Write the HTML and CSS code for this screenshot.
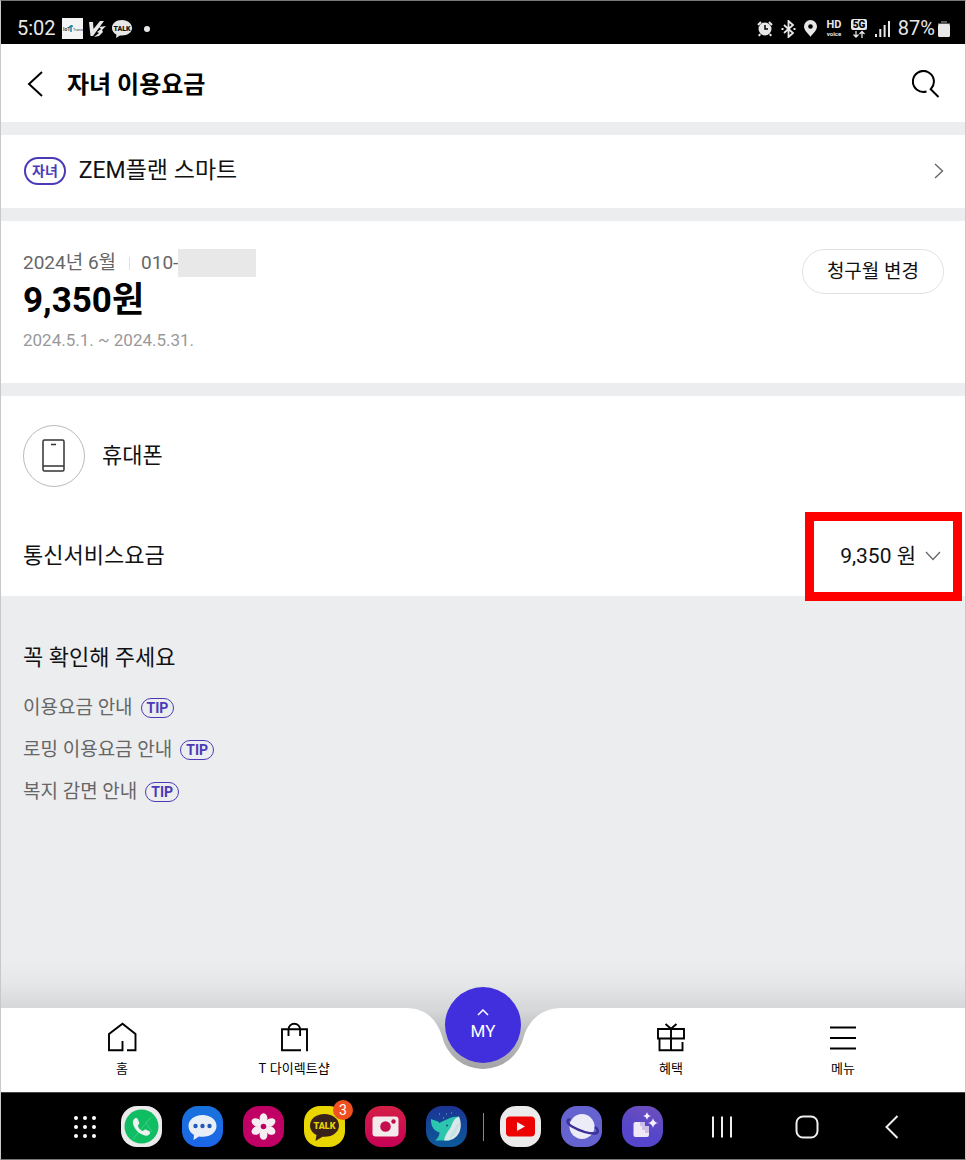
FILE: index.html
```html
<!DOCTYPE html>
<html lang="ko">
<head>
<meta charset="utf-8">
<meta name="viewport" content="width=device-width, initial-scale=1">
<title>자녀 이용요금</title>
<link rel="stylesheet" href="styles.css">
</head>
<body>
<div class="device">
  <div class="status">
    <div class="status-left">
      <span class="status-text">5:02</span>
      <svg width="21" height="21" viewBox="0 0 21 21" aria-hidden="true"><rect width="21" height="21" fill="#f4f4f4"/><text x="1" y="13" font-size="5" font-weight="700" fill="#444">IoT</text><text x="11" y="13" font-size="4" fill="#444">Trans</text><path d="M9 7v7M7 9l4-1" stroke="#1d8aa5" stroke-width="1.5"/></svg>
      <svg class="v3" width="17" height="18" viewBox="0 0 17 18" aria-hidden="true"><path d="M0 2h4l.5 7L11 1h4L4 16H1.500zM10 7l7-1-4 4 1 2-4 4-5 1 5-4-2-1 4-3z" fill="#e8e8e8"/></svg>
      <svg class="talk-mini" width="20" height="18" viewBox="0 0 20 18" aria-hidden="true"><path d="M10 0C4 0 0 3.500 0 8c0 3 2 5.500 4.500 6.700L4 18l4-2.500h2c6 0 10-3.500 10-7.500S16 0 10 0z" fill="#e8e8e8"/><text x="10" y="11" font-size="7" font-weight="900" text-anchor="middle" fill="#111">TALK</text></svg>
      <span class="dot"></span>
    </div>
    <div class="status-right">
      <svg width="16" height="17" viewBox="0 0 16 17" aria-hidden="true"><path d="M1 5l3-3M15 5l-3-3M3 14l-1 2M13 14l1 2" stroke="#e8e8e8" stroke-width="2"/><circle cx="8" cy="9" r="6.500" fill="#e8e8e8"/><path d="M8 5v4h3" stroke="#000" stroke-width="1.500" fill="none"/></svg>
      <svg width="15" height="18" viewBox="0 0 15 18" aria-hidden="true"><path d="M3 5l9 8-4.500 4V1L12 5l-9 8M0.500 9h2M12.500 9h2" stroke="#e8e8e8" stroke-width="1.800" fill="none"/></svg>
      <svg width="13" height="17" viewBox="0 0 13 17" aria-hidden="true"><path d="M6.500 0a6.500 6.500 0 0 1 6.500 6.500C13 11 8 14 6.500 17 5 14 0 11 0 6.500A6.500 6.500 0 0 1 6.500 0z" fill="#e8e8e8"/><circle cx="6.500" cy="6.500" r="2.300"/></svg>
      <svg width="18" height="22" viewBox="0 0 18 22" aria-hidden="true"><text x="9" y="10" font-size="11" font-weight="700" text-anchor="middle" fill="#e8e8e8">HD</text><text x="9" y="18" font-size="6" font-weight="700" text-anchor="middle" fill="#e8e8e8">voice</text></svg>
      <svg width="16" height="19" viewBox="0 0 16 19" aria-hidden="true"><rect width="16" height="11" rx="2" fill="#e8e8e8"/><text x="8" y="9" font-size="10" font-weight="900" text-anchor="middle" fill="#000">5G</text><path d="M5 12v6M2.500 15.500L5 18 7.500 15.500M11 19v-6M8.500 15L11 12.500l2.500 2.500" stroke="#e8e8e8" stroke-width="1.300" fill="none"/></svg>
      <svg width="15" height="17" viewBox="0 0 15 17" aria-hidden="true"><path d="M1 17v-3M5.300 17V9M9.600 17V5M14 17V1" stroke="#e8e8e8" stroke-width="2"/></svg>
      <span class="battery-group"><span class="status-text">87%</span>
      <svg width="12" height="16" viewBox="0 0 12 16" aria-hidden="true"><path d="M3 0h6v2h3v2H0V2h3z" fill="#555"/><rect y="3" width="12" height="13" rx="1.500" fill="#e8e8e8"/></svg></span>
    </div>
  </div>

  <header class="header">
    <button class="icon-button back" aria-label="뒤로"><svg width="18" height="26" viewBox="0 0 18 26"><path d="M16 1L3 13l13 12" fill="none" stroke="#000" stroke-width="2"/></svg></button>
    <h1>자녀 이용요금</h1>
    <button class="icon-button" aria-label="검색"><svg width="28" height="28" viewBox="0 0 28 28"><path d="M14.500 21.500A10.500 10.500 0 1 1 19 18.700M18 18.500L26.500 27" fill="none" stroke="#000" stroke-width="2"/></svg></button>
  </header>

  <main>
    <a class="plan card" href="#plan">
      <span class="child-badge">자녀</span>
      <span class="plan-name">ZEM플랜 스마트</span>
      <svg width="10" height="16" viewBox="0 0 10 16" aria-hidden="true"><path d="M1 1l7.500 7L1 15" fill="none" stroke="#666" stroke-width="1.400"/></svg>
    </a>

    <section class="bill card">
      <div class="bill-info">
        <p class="bill-month"><span>2024년 6월</span><span class="divider"></span><span class="phone">010-<span class="masked"></span></span></p>
        <p class="bill-total">9,350원</p>
        <p class="bill-period">2024.5.1. ~ 2024.5.31.</p>
      </div>
      <button class="month-button">청구월 변경</button>
    </section>

    <section class="service card">
      <div class="service-head">
        <span class="phone-icon"><svg width="24" height="34" viewBox="0 0 24 34" aria-hidden="true"><rect x="1" y="1" width="21" height="31" rx="1.500" fill="none" stroke="#333" stroke-width="1.500"/><path d="M1 27h21M9 5.500h5" stroke="#333" stroke-width="1.400"/></svg></span>
        <h2>휴대폰</h2>
      </div>
      <div class="fee">
        <span>통신서비스요금</span>
        <button class="fee-toggle">9,350 원<svg width="16" height="10" viewBox="0 0 16 10" aria-hidden="true"><path d="M1 1l7 7.500L15 1" fill="none" stroke="#666" stroke-width="1.300"/></svg></button>
        <span class="highlight"></span>
      </div>
    </section>

    <section class="tips">
      <h2>꼭 확인해 주세요</h2>
      <ul>
        <li><a href="#usage">이용요금 안내<span class="tip">TIP</span></a></li>
        <li><a href="#roaming">로밍 이용요금 안내<span class="tip">TIP</span></a></li>
        <li><a href="#welfare">복지 감면 안내<span class="tip">TIP</span></a></li>
      </ul>
    </section>
  </main>

  <nav class="tabs">
    <div class="tab-group tab-left">
      <a href="#home"><svg width="30" height="30" viewBox="0 0 30 30"><path d="M15.500 19v9.200H2V12L15.500 1.700 28.500 12v16.200H20" fill="none" stroke="#000" stroke-width="1.900"/></svg>홈</a>
      <a href="#shop"><svg width="30" height="30" viewBox="0 0 30 30"><path d="M22 28.200H3V7.200h25v22M9.500 14V7.500a5.800 5.800 0 0 1 11.600 0V14" fill="none" stroke="#000" stroke-width="1.900"/></svg>T 다이렉트샵</a>
    </div>
    <div class="notch">
      <svg class="notch-shape" viewBox="0 0 160 84" aria-hidden="true"><defs><linearGradient id="notch-shade" x1="0" y1="0" x2="0" y2="1"><stop offset="0" stop-color="#d8d9db"/><stop offset=".4" stop-color="#bdbec0"/><stop offset="1" stop-color="#a4a4a6"/></linearGradient></defs><path d="M0 0H160V61H0z" fill="url(#notch-shade)"/><path d="M0 0H3C23 0 34 12 39 28A42 42 0 0 0 121 28C126 12 139 0 159 0H160V84H0z" fill="#fff"/></svg>
      <button class="my"><svg width="12" height="7" viewBox="0 0 12 7" aria-hidden="true"><path d="M1 6l5-5 5 5" fill="none" stroke="#fff" stroke-width="1.500"/></svg>MY</button>
    </div>
    <div class="tab-group tab-right">
      <a href="#benefit"><svg width="30" height="30" viewBox="0 0 30 30"><path d="M2 7h26v9.500H2zM15 7v21M3.500 16.500v11.700h23V20M9.500 2L15 6.800 20.500 2" fill="none" stroke="#000" stroke-width="1.900"/></svg>혜택</a>
      <a href="#menu"><svg width="30" height="30" viewBox="0 0 30 30"><path d="M2 5.500h26M2 16h26M2 26.500h26" stroke="#000" stroke-width="2"/></svg>메뉴</a>
    </div>
  </nav>

  <div class="dock">
    <button class="apps" aria-label="모든 앱"><svg width="28" height="28" viewBox="0 0 28 28" fill="#fff"><circle cx="5" cy="5" r="2"/><circle cx="14" cy="5" r="2"/><circle cx="23" cy="5" r="2"/><circle cx="5" cy="14" r="2"/><circle cx="14" cy="14" r="2"/><circle cx="23" cy="14" r="2"/><circle cx="5" cy="23" r="2"/><circle cx="14" cy="23" r="2"/><circle cx="23" cy="23" r="2"/></svg></button>
    <div class="app-row">
      <button class="app white" aria-label="전화"><svg viewBox="0 0 41 41"><circle cx="20.500" cy="20.500" r="17" fill="#0fbd62"/><path d="M12 33L30 11M25 17l6 9" stroke="#5cd797" stroke-width=".6"/><path d="M14.500 12c-2 1-3 3-2.500 5.500 1.500 6 6 10.500 12 12 2.500.7 4-.3 5-2.300.4-1-.1-1.800-1-2.300l-3-1.300c-1-.4-1.700 0-2.500.9-.5.500-1 .5-1.600.2-1.700-1-3-2.500-3.800-4.300-.3-.7-.2-1.100.3-1.600.9-.8 1.100-1.500.7-2.500l-1.500-3.500c-.3-.8-1.300-1.100-2.100-.8z" fill="#f0f0f0"/></svg></button>
      <button class="app blue" aria-label="메시지"><svg viewBox="0 0 41 41"><path d="M20.500 9C12 9 6.500 14 6.500 20c0 4 2 7 5.500 9l-.5 5 5.500-3.500c1 .3 2.300.3 3.500.3 8.500 0 14-4.800 14-10.800S29 9 20.500 9z" fill="#e8eef5"/><g fill="#2159b5"><circle cx="13.500" cy="20" r="2.200"/><circle cx="20.500" cy="20" r="2.200"/><circle cx="27.500" cy="20" r="2.200"/></g></svg></button>
      <button class="app pink" aria-label="갤러리"><svg viewBox="0 0 41 41"><g fill="#f5edf1"><ellipse cx="20.500" cy="12.500" rx="3.900" ry="5.300"/><ellipse cx="20.500" cy="28.500" rx="3.900" ry="5.300"/><ellipse cx="20.500" cy="12.500" rx="3.900" ry="5.300" transform="rotate(60 20.500 20.500)"/><ellipse cx="20.500" cy="12.500" rx="3.900" ry="5.300" transform="rotate(120 20.500 20.500)"/><ellipse cx="20.500" cy="12.500" rx="3.900" ry="5.300" transform="rotate(240 20.500 20.500)"/><ellipse cx="20.500" cy="12.500" rx="3.900" ry="5.300" transform="rotate(300 20.500 20.500)"/><circle cx="20.500" cy="20.500" r="4.800"/></g><circle cx="20.500" cy="20.500" r="2.800" fill="#c00060"/></svg></button>
      <button class="app yellow" aria-label="카카오톡"><svg viewBox="0 0 41 41"><path d="M20.500 8C12 8 6 13 6 19.500c0 4 2.500 7.500 6.500 9.500l-1 6 7-4.200h2c8.500 0 14.500-5 14.500-11.300S29 8 20.500 8z" fill="#39211b"/><text x="20.500" y="23" font-size="9" font-weight="900" text-anchor="middle" fill="#e9d500">TALK</text></svg><span class="count">3</span></button>
      <button class="app red" aria-label="카메라"><svg viewBox="0 0 41 41"><rect x="7.500" y="10.500" width="26" height="20" rx="3" fill="#f3eaec"/><circle cx="20.500" cy="20.500" r="5.300" fill="#c40d4d"/><circle cx="28.500" cy="15.500" r="2.200" fill="#c40d4d"/></svg></button>
      <button class="app navy" aria-label="웨일"><svg viewBox="0 0 41 41"><path d="M5 13c3 2 6.500 1 8.500 4 6-3 11-6.500 19.500-6.500L24 34.500H9c2.500-2 4.500-4.500 4.500-8C8 25 4.500 20 5 13z" fill="#2bc6ad"/><path d="M33 10.500c4.500 10.500.5 22.500-11 24h-4c1-5 3-8 6-12 3-5 3-10 9-12z" fill="#d8e8ea"/><path d="M27 30l7-13M24 32l8-14" stroke="#bcd5da" stroke-width=".8"/><circle cx="21" cy="19.500" r=".9" fill="#08476a"/><path d="M20 8h1M25 7h1M17 12h1M13 8h1" stroke="#7eb4dd"/></svg></button>
    </div>
    <span class="dock-divider"></span>
    <div class="app-row">
      <button class="app white" aria-label="YouTube"><svg viewBox="0 0 41 41"><rect x="6" y="10.500" width="29" height="20" rx="4" fill="#ed0000"/><path d="M17 16l8 4.500-8 4.500z" fill="#f4f4f4"/></svg></button>
      <button class="app violet" aria-label="인터넷"><svg viewBox="0 0 41 41"><circle cx="21" cy="20.500" r="12.500" fill="#ececf8"/><path d="M9.500 13.500C5.500 13 5 17 11 20.500c7 4 16 7 23 7 4-.3 3.500-4.500 0-6.500" fill="none" stroke="#3d2f98" stroke-width="2.500"/></svg></button>
      <button class="app purple" aria-label="AI 기능"><svg viewBox="0 0 41 41"><path d="M14 16h6v5h7v8a2 2 0 0 1-2 2H13.500a2 2 0 0 1-2-2V18a2 2 0 0 1 2-2z" fill="#eee9f5"/><path d="M18 16h5v4h4v7h-4v-3h-3v-4h-2z" fill="#cdbfe6"/><path d="M25 6q.7 3.300 4 4-3.300.7-4 4-.7-3.300-4-4 3.300-.7 4-4zM31 12q.8 4.200 5 5-4.200.8-5 5-.8-4.200-5-5 4.200-.8 5-5z" fill="#f5effa"/></svg></button>
    </div>
    <div class="keys">
      <button aria-label="최근 앱"><svg width="30" height="24" viewBox="0 0 30 24"><path d="M6 1.500v21M15 1.500v21M24 1.500v21" stroke="#eee" stroke-width="2"/></svg></button>
      <button aria-label="홈"><svg width="30" height="24" viewBox="0 0 30 24"><rect x="4.500" y="1.500" width="21" height="21" rx="6.500" fill="none" stroke="#eee" stroke-width="2"/></svg></button>
      <button aria-label="이전"><svg width="30" height="24" viewBox="0 0 30 24"><path d="M20.500 1L9.500 12l11 11" fill="none" stroke="#eee" stroke-width="2"/></svg></button>
    </div>
  </div>
</div>
</body>
</html>
```
FILE: styles.css
```css
* { box-sizing: border-box; }

body {
  margin: 0;
  font-family: Roboto, "Noto Sans CJK KR", sans-serif;
  color: #111;
}

h1, h2, p, ul { margin: 0; padding: 0; }
ul { list-style: none; }
a { color: inherit; text-decoration: none; }
svg { display: block; }

button {
  border: 0;
  padding: 0;
  background: none;
  font: inherit;
  color: inherit;
}

.device {
  display: flex;
  flex-direction: column;
  min-height: 100vh;
  border: 1px solid #c8c8c8;
  border-top-color: #777;
  border-bottom-color: #777;
  background: #ecedef;
}

/* Status bar */
.status {
  display: flex;
  justify-content: space-between;
  align-items: center;
  padding: 12px 15px 0 16px;
  background: #000;
  color: #e8e8e8;
}
.status-left, .status-right, .battery-group { display: flex; align-items: center; }
.status-left { gap: 6px; }
.status-right { gap: 8px; }
.battery-group { gap: 3px; }
.status-text { font-size: 20px; line-height: 31px; }
.dot { width: 6px; height: 6px; margin-left: 6px; border-radius: 50%; background: #e8e8e8; }

/* Header */
.header {
  display: flex;
  align-items: center;
  padding: 22px 25px 20px;
  background: #fff;
}
.header h1 { flex: 1; padding-top: 2px; font-size: 24px; line-height: 34px; font-weight: 700; color: #000; }
.icon-button.back { margin-right: 23px; }

main { flex: 1; }
.card { margin-top: 13px; background: #fff; }

.plan {
  display: flex;
  align-items: center;
  padding: 19px 21px 21px 23px;
}
.child-badge {
  padding: 0 6px;
  border: 2px solid #4a3ab8;
  border-radius: 14px;
  font-size: 14px;
  line-height: 24px;
  font-weight: 700;
  color: #4a3ab8;
}
.plan-name { flex: 1; margin-left: 13px; font-size: 23px; line-height: 33px; }

.bill {
  display: flex;
  justify-content: space-between;
  align-items: flex-start;
  padding: 28px 21px 26px 22px;
}
.bill-month { display: flex; align-items: center; font-size: 19px; line-height: 28px; color: #666; }
.divider { width: 1px; height: 13px; margin: 0 11px 0 13px; background: #e0e0e0; }
.phone { display: flex; align-items: center; }
.masked { width: 78px; height: 28px; background: #e8e8e8; }
.bill-total { padding-top: 2px; font-size: 35px; line-height: 44px; font-weight: 700; color: #000; }
.bill-period { font-size: 17px; line-height: 34px; color: #999; }
.month-button {
  padding: 1px 24px 0;
  border: 1px solid #e2e2e2;
  border-radius: 23px;
  font-size: 19px;
  line-height: 42px;
}

.service { padding-top: 29px; }
.service-head { display: flex; align-items: center; gap: 17px; padding: 0 22px; }
.service-head h2 { font-size: 22px; line-height: 34px; font-weight: 400; }
.phone-icon {
  display: grid;
  place-items: center;
  width: 62px;
  height: 62px;
  border: 1px solid #bbb;
  border-radius: 50%;
}
.fee {
  position: relative;
  display: flex;
  justify-content: space-between;
  align-items: center;
  margin-top: 29px;
  padding: 23px 24px 23px 22px;
  font-size: 22px;
  line-height: 34px;
}
.fee-toggle { display: flex; align-items: center; gap: 9px; font-size: 21px; }
.highlight {
  position: absolute;
  top: -4px;
  right: 3px;
  bottom: -5px;
  width: 157px;
  border: 9px solid #fe0000;
  pointer-events: none;
}

.tips { padding: 45px 22px; color: #666; }
.tips h2 { margin-bottom: 12px; font-size: 22px; line-height: 34px; font-weight: 400; color: #111; }
.tips a { display: flex; align-items: center; gap: 8px; font-size: 19px; line-height: 42px; }
.tip {
  padding: 0 5px;
  border: 1px solid #4a3ab8;
  border-radius: 10px;
  font-size: 14px;
  line-height: 18px;
  font-weight: 700;
  color: #4a3ab8;
}

/* Bottom tabs */
.tabs {
  position: relative;
  display: grid;
  grid-template-columns: 1fr 160px 1fr;
}
.tabs::before {
  content: "";
  position: absolute;
  bottom: 100%;
  left: 0;
  right: 0;
  height: 50px;
  background: linear-gradient(#ecedef, #e6e7e9 50%, #d6d7d9);
}
.tab-group { display: flex; padding-top: 14px; background: #fff; }
.tab-left { padding-left: 35px; padding-right: 23px; }
.tab-right { padding-left: 22px; padding-right: 36px; }
.tab-group a {
  flex: 1;
  display: flex;
  flex-direction: column;
  align-items: center;
  gap: 7px;
  font-family: "Noto Sans CJK KR", sans-serif;
  font-size: 13px;
  line-height: 18px;
  color: #000;
}
.notch { position: relative; height: 84px; }
.notch-shape { width: 100%; height: 100%; }
.my {
  position: absolute;
  top: -21px;
  left: 42px;
  display: flex;
  flex-direction: column;
  align-items: center;
  gap: 3px;
  width: 76px;
  height: 76px;
  padding-top: 22px;
  border-radius: 50%;
  background: #412fde;
  font-size: 17px;
  line-height: 24px;
  color: #fff;
}

/* System dock */
.dock {
  display: flex;
  justify-content: center;
  align-items: center;
  padding: 13px 0 12px 12px;
  border-top: 1px solid #444;
  background: #000;
}
.apps { margin-right: 22px; }
.app-row { display: flex; gap: 20px; }
.app {
  position: relative;
  width: 41px;
  height: 41px;
  border-radius: 16px;
}
.app svg { width: 100%; height: 100%; }
.white { background: #ebebeb; }
.blue { background: linear-gradient(#1872dc, #1c66e8); }
.pink { background: #c00064; }
.yellow { background: #e9d500; }
.red { background: linear-gradient(#d32045, #c60056); }
.navy { background: linear-gradient(#1b3494, #0d5a9a); }
.violet { background: #6563cf; }
.purple { background: linear-gradient(200deg, #7050b8, #5546cb 60%); }
.count {
  position: absolute;
  top: -6px;
  right: -8px;
  width: 20px;
  height: 20px;
  border-radius: 50%;
  background: #f0501f;
  font-size: 14px;
  line-height: 20px;
  text-align: center;
  color: #fff;
}
.dock-divider { width: 1px; height: 28px; margin: 0 16px; background: #888; }
.keys { display: flex; gap: 55px; margin-left: 44px; }
```
